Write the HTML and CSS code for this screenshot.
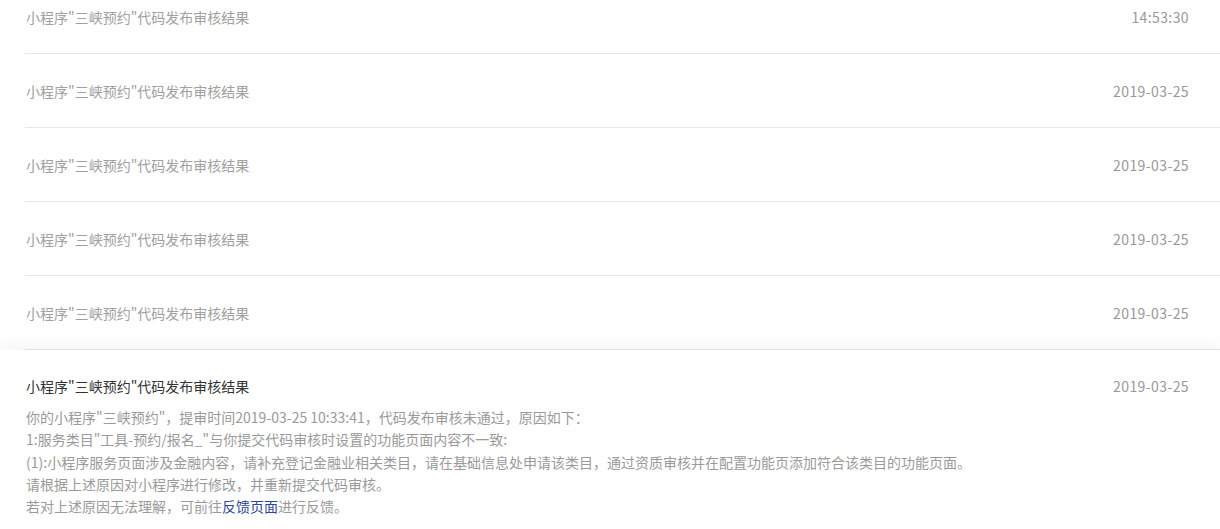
FILE: index.html
```html
<!DOCTYPE html>
<html lang="zh-CN">
<head>
  <meta charset="UTF-8" />
  <meta name="viewport" content="width=device-width, initial-scale=1.0" />
  <title>消息列表</title>
  <link rel="stylesheet" href="styles.css">
</head>
<body>
  <div class="list">
    <div class="msg"><span class="msg-title">小程序"三峡预约"代码发布审核结果</span><span class="msg-time">14:53:30</span></div>
    <div class="msg"><span class="msg-title">小程序"三峡预约"代码发布审核结果</span><span class="msg-time">2019-03-25</span></div>
    <div class="msg"><span class="msg-title">小程序"三峡预约"代码发布审核结果</span><span class="msg-time">2019-03-25</span></div>
    <div class="msg"><span class="msg-title">小程序"三峡预约"代码发布审核结果</span><span class="msg-time">2019-03-25</span></div>
    <div class="msg"><span class="msg-title">小程序"三峡预约"代码发布审核结果</span><span class="msg-time">2019-03-25</span></div>

    <div class="msg-open">
      <div class="msg-head"><span class="msg-title">小程序"三峡预约"代码发布审核结果</span><span class="msg-time">2019-03-25</span></div>
      <div class="msg-body">
        <p>你的小程序"三峡预约"，提审时间2019-03-25 10:33:41，代码发布审核未通过，原因如下：</p>
        <p>1:服务类目"工具-预约/报名_"与你提交代码审核时设置的功能页面内容不一致:</p>
        <p>(1):小程序服务页面涉及金融内容，请补充登记金融业相关类目，请在基础信息处申请该类目，通过资质审核并在配置功能页添加符合该类目的功能页面。</p>
        <p>请根据上述原因对小程序进行修改，并重新提交代码审核。</p>
        <p>若对上述原因无法理解，可前往<a href="#">反馈页面</a>进行反馈。</p>
      </div>
    </div>
  </div>
</body>
</html>
```

FILE: styles.css
```css
body { margin: 0; background: #fff; font-family: "Noto Sans CJK SC", "Microsoft YaHei", sans-serif; font-size: 14px; overflow: hidden; }
.list { margin-top: -20px; }
.msg { display: flex; justify-content: space-between; align-items: center; height: 73px; margin-left: 25px; padding: 0 31px 0 1px; border-bottom: 1px solid #e6e6e6; color: #a0a0a0; }
.msg-time { color: #999; letter-spacing: 0.4px; }
.msg-open { background: #fff; box-shadow: 0 -6px 16px rgba(0,0,0,0.04); padding: 25px 31px 0 26px; }
.msg-head { display: flex; justify-content: space-between; line-height: 22px; color: #333; }
.msg-body { margin-top: 9px; color: #9a9a9a; line-height: 22.3px; }
.msg-body p { margin: 0; }
.msg-body a { color: #2c4596; text-decoration: none; }
```
